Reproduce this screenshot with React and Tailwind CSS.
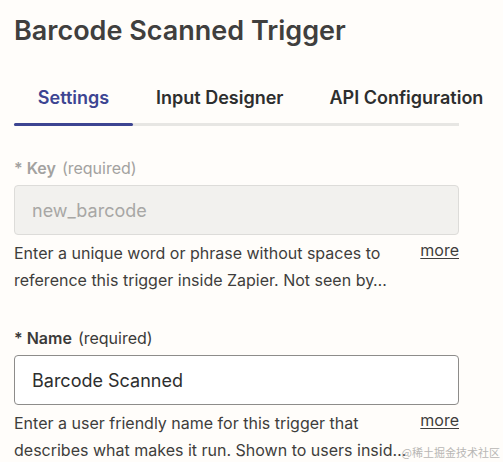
import React from 'react';

function Field({ label, value, disabled, help }) {
	return (
		<div>
			<div className={`flex items-baseline gap-[6px] text-[16px] leading-[20px] ${disabled ? 'text-[#a3a2a0]' : 'text-[#3b3a39]'}`}>
				<span className="font-semibold">* {label}</span>
				<span>(required)</span>
			</div>
			<div
				className={`mt-[7px] h-[50px] w-[445px] rounded-[4px] border px-[17px] flex items-center text-[18px] ${
					disabled ? 'bg-[#f2f1ee] border-[#dddcd9] text-[#a8a7a5]' : 'bg-white border-[#8d8c8a] text-[#2d2e2e]'
				}`}>
				{value}
			</div>
			<div className="mt-[5px] flex w-[445px] justify-between">
				<p className="text-[16px] leading-[27px] text-[#3e3d3c] whitespace-nowrap">
					{help.map(line => (
						<span key={line} className="block">
							{line}
						</span>
					))}
				</p>
				<a className="mt-[-3px] text-[16px] leading-[27px] text-[#3e3d3c] underline underline-offset-2">more</a>
			</div>
		</div>
	);
}

export default function App() {
	return (
		<div className="relative h-[462px] w-[503px] overflow-hidden bg-[#fffdfa] pl-[14px] pt-[13px] font-['Inter',sans-serif]">
			<h1 className="text-[27px] leading-[36px] font-semibold text-[#403f3e]">Barcode Scanned Trigger</h1>

			<div className="mt-[37px] w-[445px]">
				<div className="flex whitespace-nowrap text-[18px] font-semibold leading-[24px]">
					<div className="w-[119px] shrink-0 text-center text-[#3d4592]">Settings</div>
					<div className="ml-[23px] shrink-0 text-[#2d2e2e]">Input Designer</div>
					<div className="ml-[46px] shrink-0 text-[#2d2e2e]">API Configuration</div>
				</div>
				<div className="mt-[13px] flex h-[3px] bg-[#e7e6e3]">
					<div className="w-[119px] rounded-full bg-[#3d4592]" />
				</div>
			</div>

			<div className="mt-[32px] flex flex-col gap-[34px]">
				<Field
					label="Key"
					value="new_barcode"
					disabled
					help={['Enter a unique word or phrase without spaces to', 'reference this trigger inside Zapier. Not seen by…']}
				/>
				<Field
					label="Name"
					value="Barcode Scanned"
					help={['Enter a user friendly name for this trigger that', 'describes what makes it run. Shown to users insid…']}
				/>
			</div>

			<div className="absolute bottom-[3px] right-[3px] text-[11px] leading-[14px] text-[#b8b7b5] font-['Noto_Sans_CJK_SC',sans-serif]">
				@稀土掘金技术社区
			</div>
		</div>
	);
}
